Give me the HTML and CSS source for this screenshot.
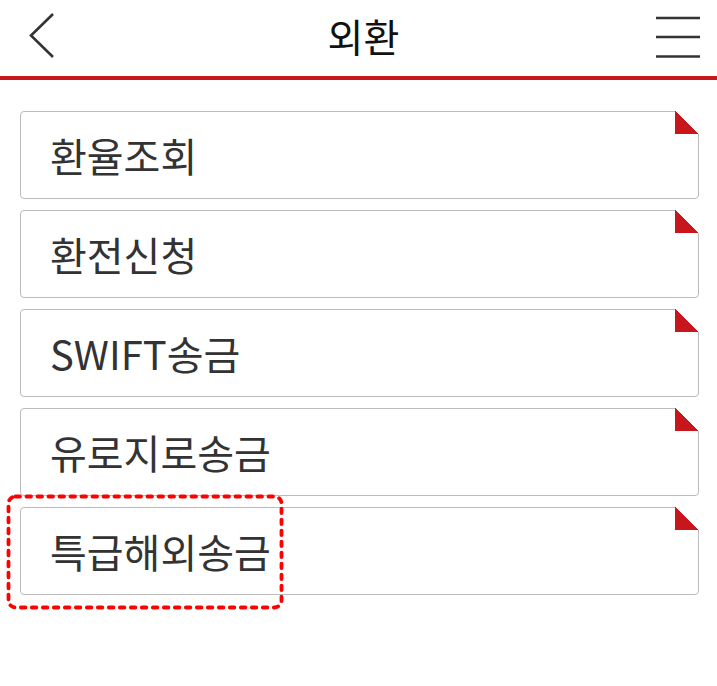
FILE: index.html
```html
<!DOCTYPE html>
<html lang="ko">
<head>
    <meta charset="UTF-8">
    <meta name="viewport" content="width=device-width, initial-scale=1.0">
    <title>외환</title>
    <link rel="stylesheet" href="styles.css">
</head>
<body>

    <div class="header">
        <a class="back" href="#">
            <svg width="32" height="48" viewBox="0 0 32 48">
                <path d="M27 2 L5 23.5 L27 45" fill="none" stroke="#333" stroke-width="2.6"/>
            </svg>
        </a>
        <div class="title">외환</div>
        <a class="menu" href="#">
            <svg width="46" height="44" viewBox="0 0 46 44">
                <path d="M1 3 H45 M1 22 H45 M1 41.5 H45" stroke="#333" stroke-width="2.4"/>
            </svg>
        </a>
    </div>

    <div class="list">
        <a class="item" href="#">환율조회</a>
        <a class="item" href="#">환전신청</a>
        <a class="item" href="#">SWIFT송금</a>
        <a class="item" href="#">유로지로송금</a>
        <a class="item" href="#">특급해외송금
            <svg class="focus-mark" width="278" height="116" viewBox="0 0 278 116">
                <rect x="2.5" y="2.5" width="273" height="111" rx="7" fill="none" stroke="#f00" stroke-width="3.8" stroke-dasharray="4.5 6.5" stroke-linecap="round"/>
            </svg>
        </a>
    </div>

</body>
</html>
```

FILE: styles.css
```css
body {
    margin: 0;
    background-color: #fff;
    font-family: "Noto Sans CJK KR", "Noto Sans", sans-serif;
}
.header {
    height: 76px;
    border-bottom: 4px solid #c8161d;
    display: flex;
    align-items: center;
    justify-content: space-between;
    padding: 0 16px 0 26px;
}
.back, .menu {
    display: flex;
    width: 46px;
}
.back svg {
    margin-top: -5px;
}
.menu svg {
    margin-top: -3px;
}
.title {
    font-size: 39px;
    color: #111;
    margin-top: -6px;
}
.list {
    padding: 31px 18px 90px 20px;
    display: flex;
    flex-direction: column;
    gap: 11px;
}
.item {
    position: relative;
    display: flex;
    align-items: center;
    height: 86px;
    padding-left: 29px;
    border: 1px solid #bbb;
    border-radius: 4px;
    font-size: 40px;
    color: #333;
    text-decoration: none;
}
.item::after {
    content: "";
    position: absolute;
    top: -1px;
    right: -1px;
    width: 24px;
    height: 23px;
    background: linear-gradient(to top right, #c8161d 50%, #fff 50%);
}
.focus-mark {
    position: absolute;
    left: -15px;
    top: -14px;
}
```
